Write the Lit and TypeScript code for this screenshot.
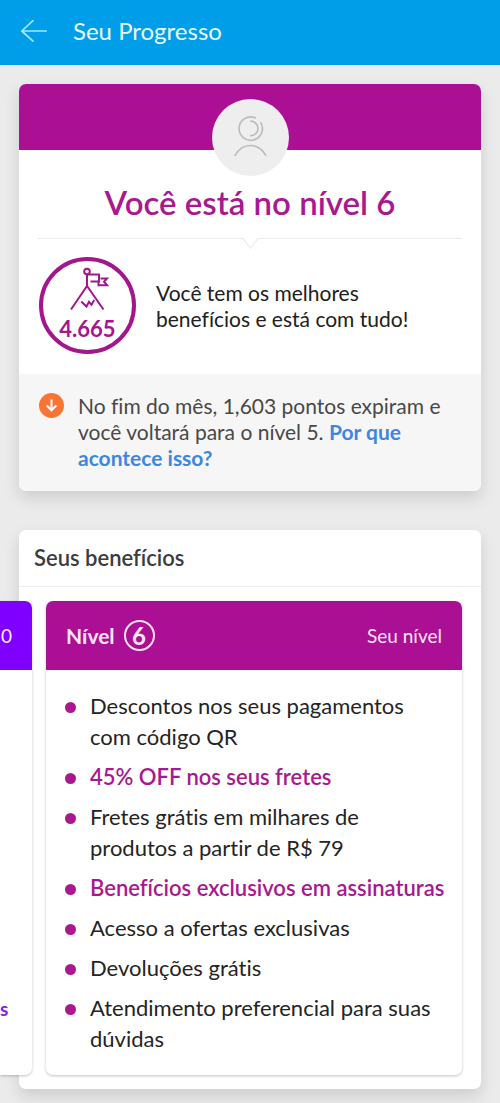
import { LitElement, html, css } from "lit";
import { customElement } from "lit/decorators.js";
import { classMap } from "lit/directives/class-map.js";

interface Benefit {
  text: string;
  strong?: boolean;
}

const BENEFITS: Benefit[] = [
  { text: "Descontos nos seus pagamentos com código QR" },
  { text: "45% OFF nos seus fretes", strong: true },
  { text: "Fretes grátis em milhares de produtos a partir de R$ 79" },
  { text: "Benefícios exclusivos em assinaturas", strong: true },
  { text: "Acesso a ofertas exclusivas" },
  { text: "Devoluções grátis" },
  { text: "Atendimento preferencial para suas dúvidas" },
];

@customElement("top-bar")
export class TopBar extends LitElement {
  static styles = css`
    :host { display: block; }
    .bar {
      display: flex;
      align-items: center;
      gap: 25px;
      height: 65px;
      padding: 0 20px;
      box-sizing: border-box;
      background: #009ee8;
      color: #e9faff;
    }
    .back {
      display: flex;
      padding: 0 0 3px;
      border: 0;
      background: none;
      color: #a5e6fb;
      cursor: pointer;
    }
    .title {
      margin: 0;
      padding-bottom: 4px;
      font-size: 24px;
      line-height: 28px;
      font-weight: 400;
    }
  `;

  render() {
    return html`
      <header class="bar">
        <button class="back" aria-label="Voltar">
          <svg width="28" height="24" viewBox="0 0 28 24" fill="none" stroke="currentColor" stroke-width="1.7" stroke-linecap="round" stroke-linejoin="round">
            <path d="M26.2 12H1.8M13 1.6L1.8 12L13 22.2" />
          </svg>
        </button>
        <h1 class="title">Seu Progresso</h1>
      </header>
    `;
  }
}

@customElement("level-card")
export class LevelCard extends LitElement {
  static styles = css`
    :host { display: block; }
    .card {
      border-radius: 7px;
      background: #fff;
      box-shadow: 0 7px 16px rgba(0, 0, 0, 0.13);
      overflow: hidden;
    }
    .banner {
      display: flex;
      justify-content: center;
      align-items: flex-start;
      height: 66px;
      padding-top: 15px;
      box-sizing: border-box;
      background: #ab0f94;
    }
    .avatar { flex: none; }
    .title {
      margin: 0;
      padding: 33px 12px 16px;
      font-size: 33px;
      line-height: 39px;
      font-weight: 600;
      text-align: center;
      color: #a81990;
    }
    .divider {
      display: flex;
      height: 12px;
      margin: 0 19px;
      color: #ececec;
    }
    .rule {
      flex: 1;
      height: 1px;
      background: currentColor;
    }
    .summary {
      display: flex;
      align-items: center;
      gap: 20px;
      padding: 7px 40px 20px 20px;
    }
    .ring {
      flex: none;
      display: flex;
      flex-direction: column;
      align-items: center;
      gap: 4px;
      width: 97px;
      height: 97px;
      padding-top: 6px;
      box-sizing: border-box;
      border: 4px solid #a3168c;
      border-radius: 50%;
      color: #a3168c;
    }
    .points {
      font-size: 22px;
      line-height: 28px;
      font-weight: 700;
    }
    .text {
      margin: 0;
      font-size: 21px;
      line-height: 26px;
      color: #202020;
    }
    .notice {
      display: flex;
      align-items: flex-start;
      gap: 14px;
      padding: 19px 20px 20px;
      background: #f6f6f6;
    }
    .notice .text { color: #484848; }
    .icon { flex: none; }
    .link {
      color: #3f86e0;
      font-weight: 700;
      text-decoration: none;
    }
  `;

  render() {
    return html`
      <section class="card">
        <div class="banner">
          <svg class="avatar" width="77" height="77" viewBox="0 0 77 77" fill="none" stroke="#bdbdbd" stroke-width="1.7" stroke-linecap="round">
            <circle cx="38.5" cy="38.5" r="38.5" fill="#eeeeee" stroke="none" />
            <path d="M43.3 18.8A11.7 11.7 0 1 0 48.8 23.6" />
            <path d="M38.8 22.2A7.2 7.2 0 0 1 38.8 36.6" />
            <path d="M23.2 56.4C30.5 43.2 46.5 43.2 53.8 56.4" />
          </svg>
        </div>
        <h2 class="title">Você está no nível 6</h2>
        <div class="divider">
          <span class="rule"></span>
          <svg width="17" height="12" viewBox="0 0 17 12" fill="none" stroke="currentColor" stroke-width="1.3">
            <path d="M0 .5H1L8.5 10.3L16 .5H17" />
          </svg>
          <span class="rule"></span>
        </div>
        <div class="summary">
          <div class="ring">
            <svg width="42" height="44" viewBox="-1 0 42 44" fill="none" stroke="currentColor" stroke-width="2">
              <circle cx="19" cy="4.5" r="2.8" />
              <path d="M19 7.3V19.5M3 42.5L19 19L35.5 42.5" />
              <path d="M19.5 7.5H31V14.5H22.5M32.5 11.5H39L36 14.7L39 18.2H30.5V14.5" />
              <path d="M13.2 34.5L18.5 39.5L21 34.8L23.4 37.8L26.3 33" />
            </svg>
            <span class="points">4.665</span>
          </div>
          <p class="text">Você tem os melhores benefícios e está com tudo!</p>
        </div>
        <div class="notice">
          <svg class="icon" width="25" height="25" viewBox="0 0 25 25" fill="none" stroke="#fff" stroke-width="2">
            <circle cx="12.5" cy="12.5" r="12.5" fill="#fb7434" stroke="none" />
            <path d="M12.5 6.5V17.5M7.7 12.5L12.5 17.3L17.3 12.5" />
          </svg>
          <p class="text">
            No fim do mês, 1,603 pontos expiram e você voltará para o nível 5.
            <a class="link" href="#">Por que acontece isso?</a>
          </p>
        </div>
      </section>
    `;
  }
}

@customElement("benefits-card")
export class BenefitsCard extends LitElement {
  static styles = css`
    :host { display: block; }
    .card {
      padding-bottom: 14px;
      border-radius: 7px;
      background: #fff;
      box-shadow: 0 7px 16px rgba(0, 0, 0, 0.13);
    }
    .heading {
      margin: 0;
      padding: 14px 15px;
      border-bottom: 1px solid #e9edf0;
      font-size: 22px;
      line-height: 28px;
      font-weight: 600;
      color: #3c3c3c;
    }
    .track {
      display: flex;
      gap: 14px;
      margin: 14px 19px 0 -19px;
    }
    .level {
      display: flex;
      flex-direction: column;
      flex: 1;
      min-width: 0;
      border-radius: 7px;
      background: #fff;
      box-shadow: 0 1px 3px rgba(0, 0, 0, 0.24);
      overflow: hidden;
    }
    .previous {
      flex: 0 0 32px;
      border-radius: 0 7px 7px 0;
    }
    .top {
      display: flex;
      align-items: center;
      gap: 9px;
      height: 69px;
      padding: 0 20px;
      background: #ab0f94;
      color: #fbe6f8;
    }
    .previous .top {
      justify-content: flex-end;
      padding-left: 0;
      background: #8000ff;
    }
    .name {
      margin: 0;
      font-size: 21px;
      line-height: 28px;
      font-weight: 700;
    }
    .badge {
      display: flex;
      align-items: center;
      justify-content: center;
      width: 31px;
      height: 31px;
      box-sizing: border-box;
      border: 2px solid currentColor;
      border-radius: 50%;
      font-size: 24px;
      line-height: 28px;
      font-weight: 700;
    }
    .status {
      font-size: 19px;
      line-height: 28px;
    }
    .own { margin-left: auto; }
    .list {
      display: flex;
      flex-direction: column;
      gap: 9px;
      margin: 0;
      padding: 20px 12px 21px 19px;
      list-style: none;
    }
    .item {
      display: flex;
      gap: 14px;
      font-size: 22px;
      line-height: 31px;
      color: #242424;
    }
    .item::before {
      content: "";
      flex: none;
      width: 11px;
      height: 11px;
      margin-top: 12px;
      border-radius: 50%;
      background: #a81990;
    }
    .strong {
      font-weight: 600;
      color: #a81990;
    }
    .tail {
      display: flex;
      margin: auto 0 51px;
      padding: 0;
      font-size: 19px;
      line-height: 31px;
      font-weight: 700;
      color: #8423dc;
    }
  `;

  render() {
    return html`
      <section class="card">
        <h2 class="heading">Seus benefícios</h2>
        <div class="track">
          <article class="level previous">
            <div class="top"><span class="status">0</span></div>
            <p class="tail">s</p>
          </article>
          <article class="level">
            <div class="top">
              <h3 class="name">Nível</h3>
              <span class="badge">6</span>
              <span class="status own">Seu nível</span>
            </div>
            <ul class="list">
              ${BENEFITS.map(
                (b) => html`
                  <li class=${classMap({ item: true, strong: !!b.strong })}><span>${b.text}</span></li>
                `
              )}
            </ul>
          </article>
        </div>
      </section>
    `;
  }
}

@customElement("app-root")
export class AppRoot extends LitElement {
  static styles = css`
    :host {
      display: block;
      min-height: 100vh;
      background: #ebebeb;
      font-family: Lato, "Open Sans", sans-serif;
      font-variant-ligatures: none;
      overflow: hidden;
    }
    .page {
      display: flex;
      flex-direction: column;
      gap: 39px;
      padding: 19px 19px 14px;
    }
  `;

  render() {
    return html`
      <top-bar></top-bar>
      <main class="page">
        <level-card></level-card>
        <benefits-card></benefits-card>
      </main>
    `;
  }
}
